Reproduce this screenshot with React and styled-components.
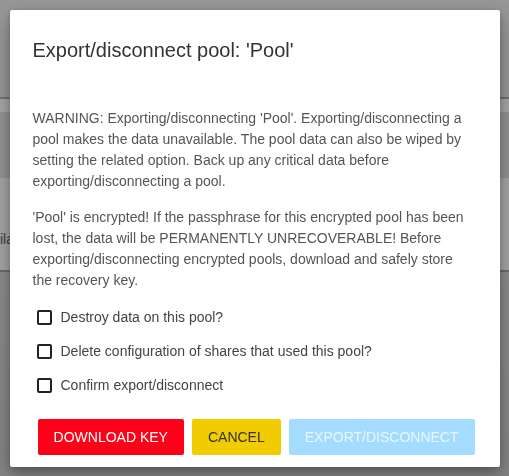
import React from "react"
import styled, { createGlobalStyle } from "styled-components"

const GlobalStyle = createGlobalStyle`
    html, body {
        margin: 0;
        padding: 0;
        height: 100%;
        overflow: hidden;
    }
    body {
        font-family: "Liberation Sans", Arial, sans-serif;
    }
`

const Page = styled.div`
    height: 476px;
    display: flex;
    flex-direction: column;
    background: #8a8a8a;
`
const Band = styled.div`
    height: ${p => p.h}px;
    background: ${p => p.bg};
    border-bottom: ${p => p.line ? `2px solid ${p.line}` : "none"};
    flex-shrink: 0;
`
const Card = styled.div`
    height: 94px;
    background: #a4a4a4;
    border-bottom: 2px solid #6c6c6c;
    display: flex;
    align-items: center;
    padding-top: 30px;
    box-sizing: border-box;
    font-size: 14px;
    color: #3e3e3e;
`
const Rest = styled.div`
    flex: 1;
    background: linear-gradient(#8c8c8c, #848484);
`

const Overlay = styled.div`
    position: fixed;
    inset: 0;
    display: flex;
    align-items: center;
    justify-content: center;
`
const Dialog = styled.div`
    width: 490px;
    height: 457px;
    box-sizing: border-box;
    background: #fff;
    border-radius: 2px;
    box-shadow: 0 8px 20px rgba(0, 0, 0, 0.3), 0 2px 6px rgba(0, 0, 0, 0.2);
    padding: 25px 24px 12px 23px;
    display: flex;
    flex-direction: column;
`
const Title = styled.h2`
    margin: 0;
    font-size: 20px;
    font-weight: normal;
    line-height: 30px;
    color: #333;
`
const Content = styled.div`
    margin-top: 43px;
    font-size: 14px;
    line-height: 21px;
    color: #555;
`
const Paragraph = styled.p`
    margin: 0 0 15px;
`
const Options = styled.div`
    display: flex;
    flex-direction: column;
    gap: 13px;
    margin-top: 1px;
`
const Option = styled.label`
    display: flex;
    align-items: center;
    gap: 9px;
    padding-left: 4px;
    font-size: 14px;
    line-height: 21px;
    color: #444;
`
const Box = styled.span`
    width: 15px;
    height: 15px;
    box-sizing: border-box;
    border: 2px solid #222;
    border-radius: 2px;
    flex-shrink: 0;
`
const Actions = styled.div`
    margin-top: auto;
    padding-right: 1px;
    display: flex;
    justify-content: flex-end;
    gap: 8px;
`
const Button = styled.button`
    height: 36px;
    padding: 0 16px;
    border: none;
    border-radius: 2px;
    font-family: inherit;
    font-size: 14px;
    text-transform: uppercase;
    background: ${p => p.bg};
    color: ${p => p.fg};
    cursor: pointer;
`

export default class App extends React.Component{
    render(){
        return <React.Fragment>
            <GlobalStyle />
            <Page>
                <Band h={97} bg="#979797" line="#727272" />
                <Band h={13} bg="#a6a6a6" />
                <Band h={66} bg="#929292" />
                <Card>ila</Card>
                <Rest />
            </Page>
            <Overlay>
                <Dialog>
                    <Title>Export/disconnect pool: 'Pool'</Title>
                    <Content>
                        <Paragraph>
                            WARNING: Exporting/disconnecting 'Pool'. Exporting/disconnecting a pool makes the data unavailable. The pool data can also be wiped by setting the related option. Back up any critical data before exporting/disconnecting a pool.
                        </Paragraph>
                        <Paragraph>
                            'Pool' is encrypted! If the passphrase for this encrypted pool has been lost, the data will be PERMANENTLY UNRECOVERABLE! Before exporting/disconnecting encrypted pools, download and safely store the recovery key.
                        </Paragraph>
                    </Content>
                    <Options>
                        {
                            ["Destroy data on this pool?", "Delete configuration of shares that used this pool?", "Confirm export/disconnect"].map((t, i) => (
                                <Option key={i}><Box />{t}</Option>
                            ))
                        }
                    </Options>
                    <Actions>
                        <Button bg="#ff0019" fg="#fff">Download Key</Button>
                        <Button bg="#f0cc00" fg="#333">Cancel</Button>
                        <Button bg="#a3dcff" fg="#eaf6ff" disabled>Export/Disconnect</Button>
                    </Actions>
                </Dialog>
            </Overlay>
        </React.Fragment>
    }
}
